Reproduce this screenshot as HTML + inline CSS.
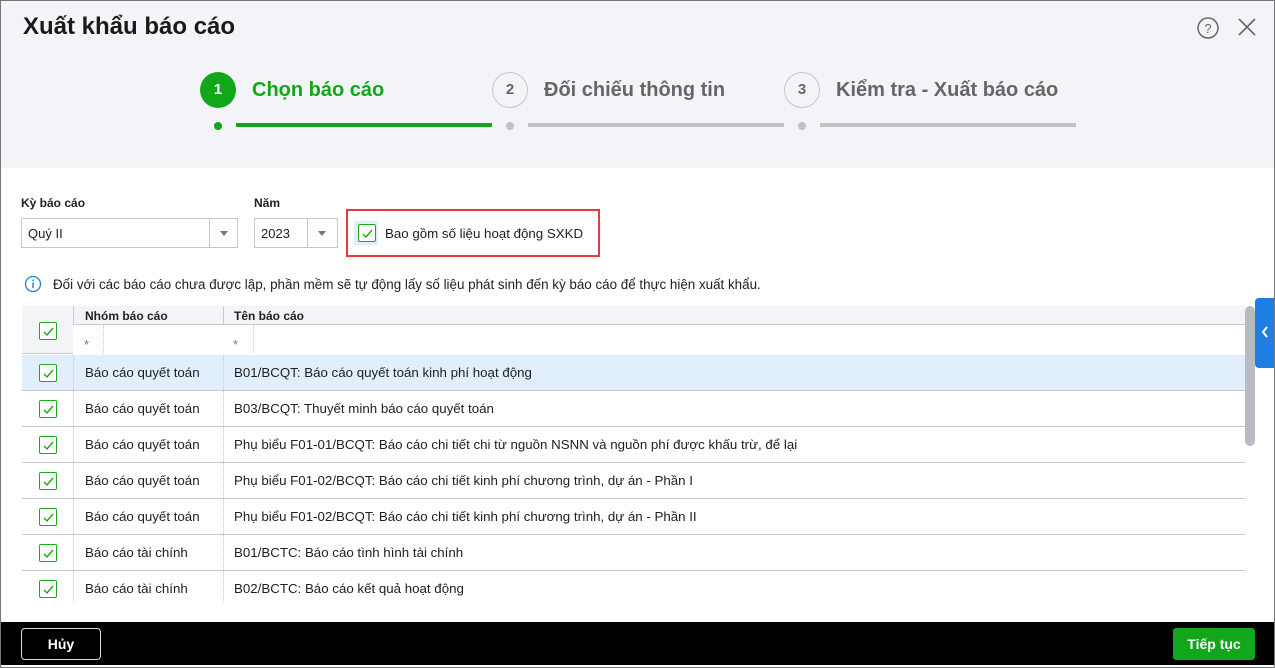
<!DOCTYPE html>
<html><head><meta charset="utf-8"><style>
*{margin:0;padding:0;box-sizing:border-box}
body{width:1275px;height:668px;position:relative;overflow:hidden;background:#fff;font-family:"Liberation Sans","Noto Sans CJK SC",sans-serif;color:#212121;font-size:13px}
.a{position:absolute}
.frame{left:0;top:0;width:1275px;height:668px;border:1px solid #777;}
.hdr{left:1px;top:1px;width:1273px;height:167px;background:#f3f4f8}
.cb{width:18px;height:18px;border:1px solid #1aaa1a;border-radius:2px;background:#fff}
.cb svg{position:absolute;left:3px;top:3px}
.row{left:22px;width:1223px;height:36px;border-bottom:1px solid #c8cad2;font-size:13.3px}
.row .g{position:absolute;left:63px;top:10px}
.row .n{position:absolute;left:212px;top:10px}
.dv{position:absolute;top:0;bottom:0;border-left:1px dotted #c8c8c8}
</style></head><body>
<div class="a hdr"></div>
<div class="a" style="left:23px;top:13px;font-size:24px;font-weight:bold;color:#1a1a1a">Xuất khẩu báo cáo</div>
<svg class="a" style="left:1196px;top:16px" width="24" height="24"><circle cx="12" cy="12" r="10" fill="none" stroke="#666" stroke-width="1.5"/><text x="12" y="17" text-anchor="middle" font-size="13" fill="#666" font-family="Liberation Sans">?</text></svg>
<svg class="a" style="left:1236px;top:16px" width="22" height="22"><path d="M3 3L19 19M19 3L3 19" stroke="#666" stroke-width="1.6"/></svg>
<div class="a" style="left:200px;top:72px;width:36px;height:36px;border-radius:50%;background:#12a61a;color:#fff;font-weight:bold;text-align:center;line-height:36px;font-size:15px">1</div>
<div class="a" style="left:252px;top:79px;font-size:20px;font-weight:bold;color:#12a61a">Chọn báo cáo</div>
<div class="a" style="left:492px;top:72px;width:36px;height:36px;border-radius:50%;border:1px solid #c8c8cc;color:#666;font-weight:bold;text-align:center;line-height:34px;font-size:15px">2</div>
<div class="a" style="left:544px;top:79px;font-size:20px;font-weight:bold;color:#666">Đối chiếu thông tin</div>
<div class="a" style="left:784px;top:72px;width:36px;height:36px;border-radius:50%;border:1px solid #c8c8cc;color:#666;font-weight:bold;text-align:center;line-height:34px;font-size:15px">3</div>
<div class="a" style="left:836px;top:79px;font-size:20px;font-weight:bold;color:#666">Kiểm tra - Xuất báo cáo</div>
<div class="a" style="left:214px;top:122px;width:8px;height:8px;border-radius:50%;background:#12a61a"></div>
<div class="a" style="left:236px;top:123px;width:256px;height:4px;background:#12a61a"></div>
<div class="a" style="left:506px;top:122px;width:8px;height:8px;border-radius:50%;background:#c0c2c8"></div>
<div class="a" style="left:528px;top:123px;width:256px;height:4px;background:#c0c2c8"></div>
<div class="a" style="left:798px;top:122px;width:8px;height:8px;border-radius:50%;background:#c0c2c8"></div>
<div class="a" style="left:820px;top:123px;width:256px;height:4px;background:#c0c2c8"></div>
<div class="a" style="left:21px;top:196px;font-size:12px;font-weight:bold">Kỳ báo cáo</div>
<div class="a" style="left:254px;top:196px;font-size:12px;font-weight:bold">Năm</div>
<div class="a" style="left:21px;top:218px;width:217px;height:30px;border:1px solid #c8c8cc;background:#fff"><span class="a" style="left:6px;top:7px">Quý II</span><div class="a" style="left:187px;top:0;height:28px;border-left:1px solid #c8c8cc"></div><span class="a" style="left:198px;top:12px;border:4px solid transparent;border-top:5px solid #777"></span></div>
<div class="a" style="left:254px;top:218px;width:84px;height:30px;border:1px solid #c8c8cc;background:#fff"><span class="a" style="left:6px;top:7px">2023</span><div class="a" style="left:52px;top:0;height:28px;border-left:1px solid #c8c8cc"></div><span class="a" style="left:63px;top:12px;border:4px solid transparent;border-top:5px solid #777"></span></div>
<div class="a" style="left:346px;top:209px;width:254px;height:48px;border:2px solid #e8393d"></div>
<div class="a" style="left:354px;top:221px;width:24px;height:24px;background:#e3eef8"></div>
<div class="a cb" style="left:358px;top:224px"><svg width="11" height="11"><path d="M1 6L4 9L10 2" fill="none" stroke="#1aaa1a" stroke-width="1.4"/></svg></div>
<div class="a" style="left:385px;top:226px;font-size:13.3px">Bao gồm số liệu hoạt động SXKD</div>
<svg class="a" style="left:24px;top:275px" width="18" height="18"><circle cx="9" cy="9" r="7.5" fill="none" stroke="#1e7fe0" stroke-width="1.3"/><rect x="8.3" y="7.5" width="1.5" height="5.5" fill="#1e7fe0"/><rect x="8.3" y="4.5" width="1.5" height="1.6" fill="#1e7fe0"/></svg>
<div class="a" style="left:53px;top:277px;font-size:13.4px">Đối với các báo cáo chưa được lập, phần mềm sẽ tự động lấy số liệu phát sinh đến kỳ báo cáo để thực hiện xuất khẩu.</div>
<div class="a" style="left:22px;top:306px;width:1223px;height:48px;background:#f3f4f8;border-bottom:1px solid #c8cad2"></div>
<div class="a" style="left:73px;top:324px;width:1172px;border-top:1px solid #c8cad2"></div>
<div class="a" style="left:73px;top:306px;height:48px;border-left:1px solid #c8cad2"></div>
<div class="a" style="left:223px;top:306px;height:48px;border-left:1px solid #c8cad2"></div>
<div class="a" style="left:73px;top:325px;width:1172px;height:29px;background:#fff"></div>
<div class="a" style="left:103px;top:325px;height:29px;border-left:1px dotted #ccc"></div>
<div class="a" style="left:253px;top:325px;height:29px;border-left:1px dotted #ccc"></div>
<div class="a" style="left:84px;top:337px;color:#777">*</div>
<div class="a" style="left:233px;top:337px;color:#777">*</div>
<div class="a" style="left:85px;top:309px;font-size:12px;font-weight:bold">Nhóm báo cáo</div>
<div class="a" style="left:234px;top:309px;font-size:12px;font-weight:bold">Tên báo cáo</div>
<div class="a cb" style="left:39px;top:322px"><svg width="11" height="11"><path d="M1 6L4 9L10 2" fill="none" stroke="#1aaa1a" stroke-width="1.4"/></svg></div>

<div class="a row" style="top:355px;background:#e1effd"><div class="dv" style="left:51px"></div><div class="dv" style="left:201px"></div><div class="a cb" style="left:17px;top:9px"><svg width="11" height="11"><path d="M1 6L4 9L10 2" fill="none" stroke="#1aaa1a" stroke-width="1.4"/></svg></div><span class="g">Báo cáo quyết toán</span><span class="n">B01/BCQT: Báo cáo quyết toán kinh phí hoạt động</span></div>
<div class="a row" style="top:391px"><div class="dv" style="left:51px"></div><div class="dv" style="left:201px"></div><div class="a cb" style="left:17px;top:9px"><svg width="11" height="11"><path d="M1 6L4 9L10 2" fill="none" stroke="#1aaa1a" stroke-width="1.4"/></svg></div><span class="g">Báo cáo quyết toán</span><span class="n">B03/BCQT: Thuyết minh báo cáo quyết toán</span></div>
<div class="a row" style="top:427px"><div class="dv" style="left:51px"></div><div class="dv" style="left:201px"></div><div class="a cb" style="left:17px;top:9px"><svg width="11" height="11"><path d="M1 6L4 9L10 2" fill="none" stroke="#1aaa1a" stroke-width="1.4"/></svg></div><span class="g">Báo cáo quyết toán</span><span class="n">Phụ biểu F01-01/BCQT: Báo cáo chi tiết chi từ nguồn NSNN và nguồn phí được khấu trừ, để lại</span></div>
<div class="a row" style="top:463px"><div class="dv" style="left:51px"></div><div class="dv" style="left:201px"></div><div class="a cb" style="left:17px;top:9px"><svg width="11" height="11"><path d="M1 6L4 9L10 2" fill="none" stroke="#1aaa1a" stroke-width="1.4"/></svg></div><span class="g">Báo cáo quyết toán</span><span class="n">Phụ biểu F01-02/BCQT: Báo cáo chi tiết kinh phí chương trình, dự án - Phần I</span></div>
<div class="a row" style="top:499px"><div class="dv" style="left:51px"></div><div class="dv" style="left:201px"></div><div class="a cb" style="left:17px;top:9px"><svg width="11" height="11"><path d="M1 6L4 9L10 2" fill="none" stroke="#1aaa1a" stroke-width="1.4"/></svg></div><span class="g">Báo cáo quyết toán</span><span class="n">Phụ biểu F01-02/BCQT: Báo cáo chi tiết kinh phí chương trình, dự án - Phần II</span></div>
<div class="a row" style="top:535px"><div class="dv" style="left:51px"></div><div class="dv" style="left:201px"></div><div class="a cb" style="left:17px;top:9px"><svg width="11" height="11"><path d="M1 6L4 9L10 2" fill="none" stroke="#1aaa1a" stroke-width="1.4"/></svg></div><span class="g">Báo cáo tài chính</span><span class="n">B01/BCTC: Báo cáo tình hình tài chính</span></div>
<div class="a row" style="top:571px;border-bottom:none;height:31px"><div class="dv" style="left:51px"></div><div class="dv" style="left:201px"></div><div class="a cb" style="left:17px;top:9px"><svg width="11" height="11"><path d="M1 6L4 9L10 2" fill="none" stroke="#1aaa1a" stroke-width="1.4"/></svg></div><span class="g">Báo cáo tài chính</span><span class="n">B02/BCTC: Báo cáo kết quả hoạt động</span></div>
<div class="a" style="left:1245px;top:306px;width:10px;height:140px;border-radius:5px;background:#b8bcc2"></div>
<div class="a" style="left:1255px;top:298px;width:20px;height:70px;background:#1f7de3;border-radius:4px 0 0 4px"></div>
<svg class="a" style="left:1261px;top:326px" width="8" height="12"><path d="M6 1L2 6L6 11" fill="none" stroke="#fff" stroke-width="2"/></svg>
<div class="a" style="left:1px;top:622px;width:1273px;height:43px;background:#000"></div>
<div class="a" style="left:21px;top:628px;width:80px;height:32px;border:1px solid #ddd;border-radius:4px;color:#fff;font-weight:bold;font-size:14px;text-align:center;line-height:30px">Hủy</div>
<div class="a" style="left:1173px;top:628px;width:82px;height:32px;background:#12a61a;border-radius:3px;color:#fff;font-weight:bold;font-size:14px;text-align:center;line-height:32px">Tiếp tục</div>
<div class="a frame"></div>
</body></html>
